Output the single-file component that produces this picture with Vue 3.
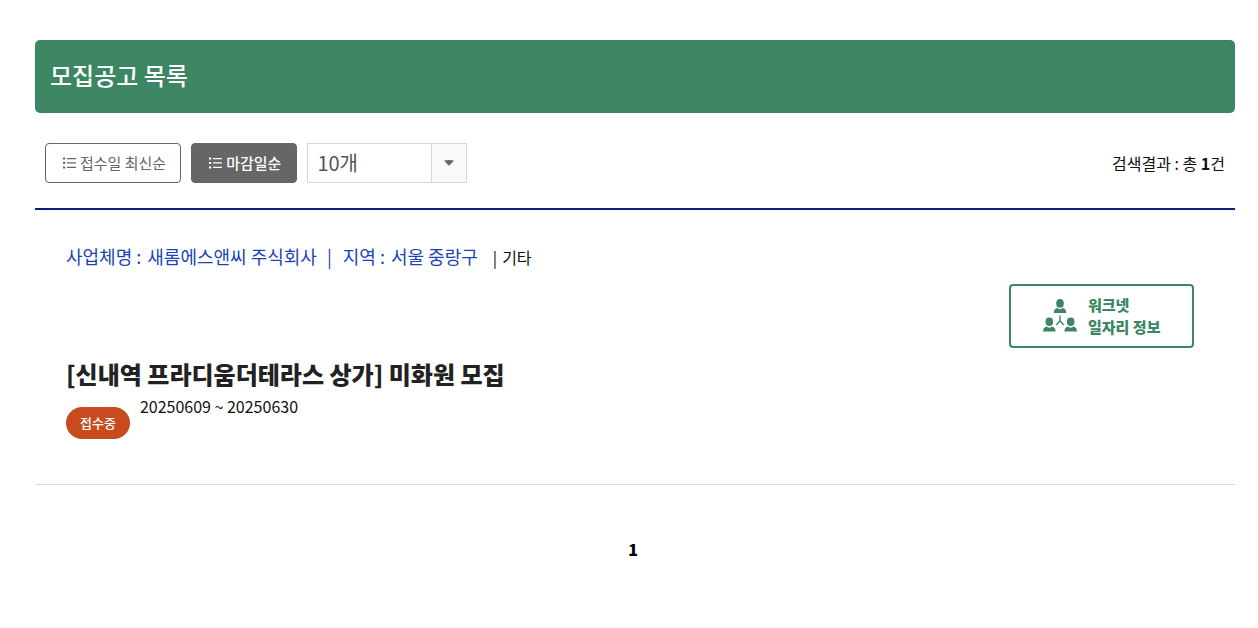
<script setup>
import { ref } from 'vue'

const sort = ref('deadline')
const pageSize = ref('10')

const sorts = [
  { key: 'recent', label: '접수일 최신순' },
  { key: 'deadline', label: '마감일순' }
]

const jobs = [
  {
    id: 1,
    company: '새롬에스앤씨 주식회사',
    region: '서울 중랑구',
    type: '기타',
    title: '[신내역 프라디움더테라스 상가] 미화원 모집',
    status: '접수중',
    period: '20250609 ~ 20250630'
  }
]
</script>

<template>
  <main class="page">
    <h1 class="page-title">모집공고 목록</h1>

    <div class="toolbar">
      <button
        v-for="s in sorts"
        :key="s.key"
        type="button"
        class="sort-btn"
        :class="{ active: sort === s.key }"
        @click="sort = s.key"
      >
        <svg class="list-icon" viewBox="0 0 13 12" aria-hidden="true">
          <path d="M0 0.5h2.2v2H0zM0 5h2.2v2H0zM0 9.5h2.2v2H0z" />
          <path d="M4 1h9v1.3H4zM4 5.3h9v1.3H4zM4 9.8h9v1.3H4z" />
        </svg>
        {{ s.label }}
      </button>

      <div class="select-wrap">
        <select v-model="pageSize" class="page-size" aria-label="페이지당 개수">
          <option value="10">10개</option>
          <option value="20">20개</option>
          <option value="30">30개</option>
        </select>
        <span class="select-arrow">
          <svg viewBox="0 0 10 6" aria-hidden="true"><path d="M0 0.5Q5 -0.3 10 0.5L5.6 5.2Q5 5.7 4.4 5.2z" /></svg>
        </span>
      </div>

      <p class="total">검색결과 : 총 <strong>{{ jobs.length }}</strong>건</p>
    </div>

    <ul class="job-list">
      <li v-for="job in jobs" :key="job.id" class="job">
        <p class="job-meta">
          <span class="pair"><span>사업체명 :</span><span>{{ job.company }}</span></span>
          <span class="pair bar">|</span>
          <span class="pair"><span>지역 :</span><span>{{ job.region }}</span></span>
          <span class="type"><span>|</span><span>{{ job.type }}</span></span>
        </p>

        <a href="#" class="worknet">
          <svg class="people-icon" viewBox="0 0 34 33" aria-hidden="true">
            <g
              v-for="p in ['translate(0 0)', 'translate(-10.7 18.4)', 'translate(10.7 18.4)']"
              :key="p"
              :transform="p"
            >
              <ellipse cx="17" cy="4.4" rx="3.8" ry="4.3" />
              <path d="M10.7 14q0-3.8 3.5-4.9Q17 11.4 19.8 9.1q3.5 1.1 3.5 4.9z" />
            </g>
            <path class="link" d="M17 16.5v5.2L13.3 26M17 21.7l3.7 4.3" />
          </svg>
          <span>워크넷<br />일자리 정보</span>
        </a>

        <h2 class="job-title">{{ job.title }}</h2>
        <div class="job-status">
          <span class="badge">{{ job.status }}</span>
          <span class="period">{{ job.period }}</span>
        </div>
      </li>
    </ul>

    <nav class="paging" aria-label="페이지">
      <a href="#" aria-current="page">1</a>
    </nav>
  </main>
</template>

<style>
body {
  background: #fff;
}
</style>

<style scoped>
.page {
  padding: 40px 23px 40px 35px;
  font-family: "Noto Sans CJK KR", "Noto Sans", sans-serif;
  font-size: 16px;
  line-height: 24px;
  color: #111;
}

h1,
h2,
p,
ul {
  margin: 0;
  padding: 0;
}

.page-title {
  padding: 17px 15px 20px;
  border-radius: 5px;
  background: #3c8664;
  color: #fff;
  font-size: 24px;
  font-weight: 500;
  line-height: 36px;
}

.toolbar {
  display: flex;
  align-items: center;
  gap: 10px;
  padding: 30px 10px 25px;
  border-bottom: 2px solid #0a1f7c;
}

.sort-btn {
  display: flex;
  align-items: center;
  gap: 4px;
  height: 40px;
  padding: 0 14px 1px 17px;
  border: 1px solid #666;
  border-radius: 4px;
  background: #fff;
  color: #666;
  font-family: inherit;
  font-size: 15px;
  font-weight: 400;
  cursor: pointer;
}

.sort-btn.active {
  padding-right: 15px;
  background: #666;
  color: #fff;
  font-weight: 500;
}

.list-icon {
  width: 13px;
  height: 12px;
  fill: currentColor;
}

.select-wrap {
  display: flex;
  position: relative;
  box-sizing: border-box;
  width: 160px;
  height: 40px;
  border: 1px solid #d7d7d7;
}

.page-size {
  flex: 1;
  padding: 0 45px 2px 9px;
  border: 0;
  appearance: none;
  background: #fff;
  color: #555;
  font-family: inherit;
  font-size: 20px;
}

.select-arrow {
  position: absolute;
  top: 0;
  right: 0;
  bottom: 0;
  display: flex;
  align-items: center;
  justify-content: center;
  width: 34px;
  border-left: 1px solid #d7d7d7;
  background: #f9f9f9;
  pointer-events: none;
}

.select-arrow svg {
  width: 10px;
  height: 6px;
  fill: #666;
}

.total {
  margin-left: auto;
}

.job-list {
  list-style: none;
}

.job {
  display: flex;
  flex-direction: column;
  padding: 31px 31px 45px;
  border-bottom: 1px solid #ddd;
}

.job-meta {
  display: flex;
  align-items: baseline;
  line-height: 30px;
}

.pair {
  display: flex;
  gap: 6px;
  color: #1a43b4;
  font-size: 18px;
}

.bar {
  margin: 0 11px 0 10px;
}

.type {
  display: flex;
  gap: 5px;
  margin-left: 15px;
}

.worknet {
  display: flex;
  align-items: center;
  align-self: flex-end;
  gap: 11px;
  box-sizing: border-box;
  width: 185px;
  height: 64px;
  margin: 12px 10px 8px 0;
  padding: 0 32px;
  border: 2px solid #3c8664;
  border-radius: 4px;
  color: #3c8664;
  font-size: 15px;
  font-weight: 900;
  line-height: 22px;
  text-decoration: none;
  white-space: nowrap;
}

.people-icon {
  flex: none;
  width: 34px;
  height: 33px;
  margin-bottom: 2px;
  fill: currentColor;
}

.people-icon .link {
  fill: none;
  stroke: currentColor;
  stroke-width: 1.4;
}

.job-title {
  color: #222;
  font-size: 24px;
  font-weight: 900;
  line-height: 36px;
}

.job-status {
  display: flex;
  align-items: flex-start;
  gap: 10px;
  padding-top: 2px;
}

.badge {
  margin-top: 13px;
  padding: 0 14px;
  border-radius: 16px;
  background: #c84b20;
  color: #fff;
  font-size: 13px;
  font-weight: 500;
  line-height: 32px;
}

.paging {
  display: flex;
  justify-content: center;
  padding: 52px 4px 0 0;
}

.paging a {
  color: #000;
  font-weight: 900;
  text-decoration: none;
}
</style>
